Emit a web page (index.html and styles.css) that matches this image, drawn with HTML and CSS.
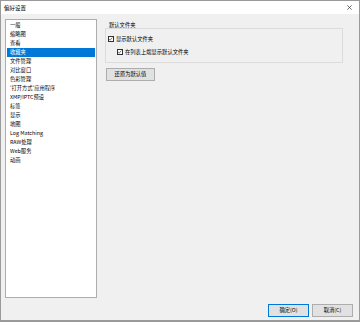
FILE: index.html
```html
<!DOCTYPE html>
<html lang="zh-CN">

<head>
      <meta charset="UTF-8">
      <meta name="viewport" content="width=device-width, initial-scale=1.0">
      <title>偏好设置</title>
      <link rel="stylesheet" href="styles.css">
</head>

<body>
      <div class="window">
            <div class="titlebar">
                  <span class="title">偏好设置</span>
                  <svg class="close" width="5" height="5" viewBox="0 0 5 5">
                        <path d="M0.3 0.3 L4.7 4.7 M4.7 0.3 L0.3 4.7" stroke="#333" stroke-width="0.7" fill="none" />
                  </svg>
            </div>
            <div class="content">
                  <div class="main">
                        <ul class="list">
                              <li>一般</li>
                              <li>缩略图</li>
                              <li>查看</li>
                              <li class="selected">收藏夹</li>
                              <li>文件管理</li>
                              <li>对比窗口</li>
                              <li>色彩管理</li>
                              <li>'打开方式'应用程序</li>
                              <li>XMP/IPTC预设</li>
                              <li>标签</li>
                              <li>显示</li>
                              <li>地图</li>
                              <li>Log Matching</li>
                              <li>RAW处理</li>
                              <li>Web服务</li>
                              <li>动画</li>
                        </ul>
                        <div class="panel">
                              <div class="group-title">默认文件夹</div>
                              <div class="group-box">
                                    <label class="check">
                                          <span class="box">
                                                <svg width="6" height="6" viewBox="0 0 6 6">
                                                      <path d="M1 3 L2.4 4.4 L5 1.4" stroke="#222" stroke-width="0.7" fill="none" />
                                                </svg>
                                          </span>
                                          显示默认文件夹
                                    </label>
                                    <label class="check sub">
                                          <span class="box">
                                                <svg width="6" height="6" viewBox="0 0 6 6">
                                                      <path d="M1 3 L2.4 4.4 L5 1.4" stroke="#222" stroke-width="0.7" fill="none" />
                                                </svg>
                                          </span>
                                          在列表上端显示默认文件夹
                                    </label>
                              </div>
                              <button class="btn reset">还原为默认值</button>
                        </div>
                  </div>
                  <div class="footer">
                        <button class="btn default">确定(O)</button>
                        <button class="btn">取消(C)</button>
                  </div>
            </div>
      </div>
</body>

</html>
```

FILE: styles.css
```css
body {
      margin: 0;
      font-family: "Noto Sans CJK SC", "Liberation Sans", sans-serif;
      font-size: 5.3px;
      color: #000;
      background-color: #f0f0f0;
}

.window {
      width: 360px;
      height: 322px;
      box-sizing: border-box;
      border: 1px solid #9a9a9a;
      border-bottom-width: 2px;
      display: flex;
      flex-direction: column;
      background-color: #f0f0f0;
}

.titlebar {
      height: 13px;
      background-color: #fff;
      display: flex;
      align-items: center;
      justify-content: space-between;
      padding: 0 7px 0 3px;
      flex-shrink: 0;
}

.title {
      font-size: 5.5px;
      line-height: 6px;
}

.content {
      flex: 1;
      display: flex;
      flex-direction: column;
}

.main {
      display: flex;
      padding: 5px 0 0 4px;
}

.list {
      list-style: none;
      margin: 0;
      padding: 1px 0 0 0;
      width: 92px;
      height: 279px;
      box-sizing: border-box;
      border: 1px solid #adadad;
      background-color: #fff;
}

.list li {
      height: 9px;
      line-height: 9px;
      margin: 0 1px;
      padding-left: 3px;
      white-space: nowrap;
}

.list li.selected {
      background-color: #0078d7;
      color: #fff;
}

.panel {
      margin-left: 8px;
      width: 238px;
}

.group-title {
      margin-top: 3px;
      height: 6px;
      line-height: 6px;
      padding-left: 4px;
}

.group-box {
      border: 1px solid #dcdcdc;
      height: 35px;
      box-sizing: border-box;
      padding: 6px 0 0 2px;
      display: flex;
      flex-direction: column;
      gap: 5px;
}

.check {
      display: flex;
      align-items: center;
      gap: 2px;
      height: 8px;
      line-height: 8px;
}

.check.sub {
      margin-left: 9px;
}

.box {
      width: 6px;
      height: 6px;
      box-sizing: border-box;
      border: 0.6px solid #333;
      background-color: #fff;
      display: flex;
}

.box svg {
      display: block;
      margin: -0.6px;
}

.btn {
      font-family: inherit;
      font-size: 5.3px;
      height: 13px;
      padding: 0;
      background-color: #e1e1e1;
      border: 1px solid #adadad;
      color: #000;
      line-height: 11px;
}

.reset {
      margin: 5px 0 0 1px;
      width: 49px;
}

.footer {
      margin-top: auto;
      display: flex;
      justify-content: flex-end;
      gap: 3px;
      padding: 0 6px 3px 0;
}

.footer .btn {
      width: 41px;
}

.btn.default {
      border-color: #0078d7;
}
```
